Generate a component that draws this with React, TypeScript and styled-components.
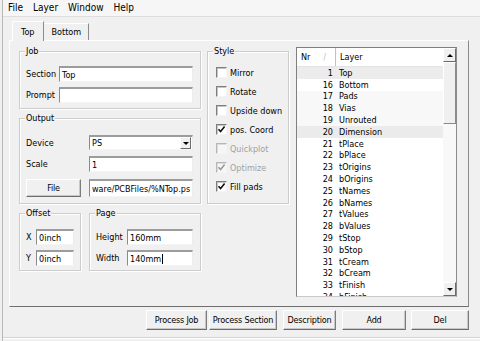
import styled, { createGlobalStyle } from "styled-components";

const GlobalStyle = createGlobalStyle`
  html, body {
    margin: 0;
    padding: 0;
    background: #f0f0f0;
  }
  body {
    font-family: "DejaVu Sans Condensed", "Liberation Sans", sans-serif;
    font-size: 9px;
    color: #000;
  }
`;

const layers: [number, string, string?][] = [
  [1, "Top", "#ececec"],
  [16, "Bottom"],
  [17, "Pads", "#f8f8f8"],
  [18, "Vias", "#f8f8f8"],
  [19, "Unrouted", "#f8f8f8"],
  [20, "Dimension", "#ebebeb"],
  [21, "tPlace"],
  [22, "bPlace"],
  [23, "tOrigins"],
  [24, "bOrigins"],
  [25, "tNames"],
  [26, "bNames"],
  [27, "tValues"],
  [28, "bValues"],
  [29, "tStop"],
  [30, "bStop"],
  [31, "tCream"],
  [32, "bCream"],
  [33, "tFinish"],
  [34, "bFinish"],
];

const styleOptions = [
  { text: "Mirror", checked: false, disabled: false },
  { text: "Rotate", checked: false, disabled: false },
  { text: "Upside down", checked: false, disabled: false },
  { text: "pos. Coord", checked: true, disabled: false },
  { text: "Quickplot", checked: false, disabled: true },
  { text: "Optimize", checked: true, disabled: true },
  { text: "Fill pads", checked: true, disabled: false },
];

const buttons = [
  { text: "Process Job", w: 61, gap: 0 },
  { text: "Process Section", w: 68, gap: 2 },
  { text: "Description", w: 53, gap: 6 },
  { text: "Add", w: 64, gap: 6 },
  { text: "Del", w: 58, gap: 5 },
];

export default function App() {
  return (
    <>
      <GlobalStyle />
      <Window>
        <MenuBar>
          <MenuItem>File</MenuItem>
          <MenuItem>Layer</MenuItem>
          <MenuItem>Window</MenuItem>
          <MenuItem>Help</MenuItem>
        </MenuBar>

        <TabStrip>
          <Tab $active>Top</Tab>
          <Tab>Bottom</Tab>
        </TabStrip>

        <TabPanel>
          <LeftCol>
            <GroupBox $h={58} $pad="14px 7px 0 6px">
              <Caption>Job</Caption>
              <FieldRow>
                <Label $w={33}>Section</Label>
                <TextBox $w={134}>Top</TextBox>
              </FieldRow>
              <FieldRow $mt={5}>
                <Label $w={33}>Prompt</Label>
                <TextBox $w={134} />
              </FieldRow>
            </GroupBox>

            <GroupBox $h={86} $pad="16px 7px 0 6px">
              <Caption>Output</Caption>
              <FieldRow>
                <Label $w={63}>Device</Label>
                <TextBox $w={104} $h={15}>
                  PS
                  <DropButton>
                    <Arrow $down />
                  </DropButton>
                </TextBox>
              </FieldRow>
              <FieldRow $mt={6}>
                <Label $w={63}>Scale</Label>
                <TextBox $w={104}>1</TextBox>
              </FieldRow>
              <FieldRow $mt={7}>
                <PushButton $w={55} $h={18}>
                  File
                </PushButton>
                <TextBox $w={104} $h={18} $ml={8}>
                  ware/PCBFiles/%NTop.ps
                </TextBox>
              </FieldRow>
            </GroupBox>

            <GroupRow>
              <GroupBox $h={58} $w={62} $pad="15px 0 0 6px">
                <Caption>Offset</Caption>
                <FieldRow>
                  <Label $w={10}>X</Label>
                  <TextBox $w={38}>0inch</TextBox>
                </FieldRow>
                <FieldRow $mt={5}>
                  <Label $w={10}>Y</Label>
                  <TextBox $w={38}>0inch</TextBox>
                </FieldRow>
              </GroupBox>
              <GroupBox $h={58} $w={112} $pad="15px 0 0 6px">
                <Caption>Page</Caption>
                <FieldRow>
                  <Label $w={31}>Height</Label>
                  <TextBox $w={66}>160mm</TextBox>
                </FieldRow>
                <FieldRow $mt={5}>
                  <Label $w={31}>Width</Label>
                  <TextBox $w={66}>
                    140mm
                    <Caret />
                  </TextBox>
                </FieldRow>
              </GroupBox>
            </GroupRow>
          </LeftCol>

          <GroupBox $h={153} $w={82} $pad="11px 0 0 8px" $top={4}>
            <Caption>Style</Caption>
            {styleOptions.map((opt) => (
              <CheckRow key={opt.text} $disabled={opt.disabled}>
                <CheckBox $disabled={opt.disabled}>
                  {opt.checked && (
                    <svg width="9" height="9" viewBox="0 0 9 9">
                      <path
                        d="M1.5 4.2 L3.6 6.6 L7.6 1.6"
                        fill="none"
                        stroke={opt.disabled ? "#9a9a9a" : "#111"}
                        strokeWidth="1.6"
                      />
                    </svg>
                  )}
                </CheckBox>
                {opt.text}
              </CheckRow>
            ))}
          </GroupBox>

          <ListBox>
            <ListMain>
              <ListHeader>
                <HeadCell $w={39}>
                  Nr<SortMark>/</SortMark>
                </HeadCell>
                <HeadCell>Layer</HeadCell>
              </ListHeader>
              <Rows>
                {layers.map(([nr, name, bg]) => (
                  <Row key={nr} $bg={bg}>
                    <NrCell>{nr}</NrCell>
                    <NameCell>{name}</NameCell>
                  </Row>
                ))}
              </Rows>
            </ListMain>
            <ScrollBar>
              <ScrollButton>
                <Arrow />
              </ScrollButton>
              <Thumb />
              <Track />
              <ScrollButton>
                <Arrow $down />
              </ScrollButton>
            </ScrollBar>
          </ListBox>
        </TabPanel>

        <ButtonRow>
          {buttons.map((b) => (
            <PushButton key={b.text} $w={b.w} $h={20} $ml={b.gap}>
              {b.text}
            </PushButton>
          ))}
        </ButtonRow>

        <StatusBar />
      </Window>
    </>
  );
}

const Window = styled.div`
  box-sizing: border-box;
  width: 478px;
  height: 341px;
  margin-left: 2px;
  border-left: 1px solid #b9b9b9;
  display: flex;
  flex-direction: column;
  overflow: hidden;
  background: #f0f0f0;
`;

const MenuBar = styled.div`
  box-sizing: border-box;
  height: 17px;
  display: flex;
  align-items: center;
  padding-left: 0;
  background: #f6f6f6;
  border-bottom: 1px solid #dedede;
`;

const MenuItem = styled.span`
  font-size: 10px;
  padding: 0 5px 1px 5px;
`;

const TabStrip = styled.div`
  display: flex;
  align-items: flex-end;
  height: 23px;
  padding-left: 9px;
`;

const Tab = styled.div<{ $active?: boolean }>`
  box-sizing: border-box;
  height: ${({ $active }) => ($active ? "20px" : "17px")};
  padding: 0 ${({ $active }) => ($active ? "8px" : "7px")};
  display: flex;
  align-items: center;
  border-top: 1px solid #fff;
  border-left: 1px solid ${({ $active }) => ($active ? "#fff" : "transparent")};
  border-right: 1px solid #8c8c8c;
  background: #f0f0f0;
  margin-bottom: ${({ $active }) => ($active ? "-1px" : "0")};
  position: relative;
  z-index: ${({ $active }) => ($active ? 1 : 0)};
`;

const TabPanel = styled.div`
  box-sizing: border-box;
  width: 460px;
  height: 267px;
  margin-left: 6px;
  padding: 6px 9px 0 9px;
  display: flex;
  align-items: flex-start;
  border-top: 1px solid #fff;
  border-left: 1px solid #fff;
  border-right: 1px solid #8a8a8a;
  border-bottom: 1px solid #6e6e6e;
`;

const LeftCol = styled.div`
  width: 182px;
  margin-top: 4px;
  display: flex;
  flex-direction: column;
  gap: 9px;
`;

const GroupRow = styled.div`
  display: flex;
  gap: 8px;
`;

const GroupBox = styled.div<{ $h: number; $w?: number; $pad: string; $top?: number }>`
  position: relative;
  box-sizing: border-box;
  height: ${({ $h }) => $h}px;
  width: ${({ $w }) => ($w ? `${$w}px` : "auto")};
  padding: ${({ $pad }) => $pad};
  margin-top: ${({ $top }) => $top ?? 0}px;
  margin-left: ${({ $top }) => ($top ? "6px" : "0")};
  border: 1px solid #cdcdcd;
  box-shadow: 1px 1px 0 #fff, inset 1px 1px 0 #fff;
`;

const Caption = styled.span`
  position: absolute;
  top: -7px;
  left: 5px;
  padding: 0 1px;
  background: #f0f0f0;
  line-height: 12px;
`;

const FieldRow = styled.div<{ $mt?: number }>`
  display: flex;
  align-items: center;
  margin-top: ${({ $mt }) => $mt ?? 0}px;
`;

const Label = styled.span<{ $w: number }>`
  width: ${({ $w }) => $w}px;
  flex: none;
  white-space: nowrap;
`;

const TextBox = styled.div<{ $w: number; $h?: number; $ml?: number }>`
  position: relative;
  box-sizing: border-box;
  width: ${({ $w }) => $w}px;
  height: ${({ $h }) => $h ?? 16}px;
  margin-left: ${({ $ml }) => $ml ?? 0}px;
  padding-left: 2px;
  display: flex;
  align-items: center;
  white-space: nowrap;
  overflow: hidden;
  background: #fff;
  border-top: 2px solid #9c9c9c;
  border-left: 1px solid #8a8a8a;
  border-right: 1px solid #ececec;
  border-bottom: 1px solid #f4f4f4;
`;

const Caret = styled.span`
  width: 1px;
  height: 10px;
  background: #000;
  margin-left: 1px;
`;

const DropButton = styled.div`
  position: absolute;
  right: 1px;
  top: 0;
  bottom: 0;
  width: 11px;
  box-sizing: border-box;
  display: flex;
  align-items: center;
  justify-content: center;
  background: #f0f0f0;
  border-top: 1px solid #fff;
  border-left: 1px solid #fff;
  border-right: 1px solid #6a6a6a;
  border-bottom: 1px solid #6a6a6a;
`;

const Arrow = styled.span<{ $down?: boolean }>`
  width: 0;
  height: 0;
  border-left: 3px solid transparent;
  border-right: 3px solid transparent;
  ${({ $down }) =>
    $down ? "border-top: 3px solid #000;" : "border-bottom: 3px solid #000;"}
`;

const PushButton = styled.div<{ $w: number; $h: number; $ml?: number }>`
  box-sizing: border-box;
  width: ${({ $w }) => $w}px;
  height: ${({ $h }) => $h}px;
  margin-left: ${({ $ml }) => $ml ?? 0}px;
  flex: none;
  display: flex;
  align-items: center;
  justify-content: center;
  white-space: nowrap;
  letter-spacing: -0.2px;
  background: #f0f0f0;
  border-top: 1px solid #fff;
  border-left: 1px solid #fff;
  border-right: 1px solid #7c7c7c;
  border-bottom: 1px solid #6c6c6c;
  box-shadow: inset -1px -1px 0 #c8c8c8;
`;

const CheckRow = styled.div<{ $disabled?: boolean }>`
  height: 19px;
  display: flex;
  align-items: center;
  gap: 3px;
  white-space: nowrap;
  color: ${({ $disabled }) => ($disabled ? "#a2a2a2" : "#000")};
`;

const CheckBox = styled.span<{ $disabled?: boolean }>`
  box-sizing: border-box;
  width: 11px;
  height: 11px;
  flex: none;
  display: flex;
  align-items: center;
  justify-content: center;
  background: ${({ $disabled }) => ($disabled ? "#f6f6f6" : "#fff")};
  border-top: 1px solid ${({ $disabled }) => ($disabled ? "#b6b6b6" : "#7e7e7e")};
  border-left: 1px solid ${({ $disabled }) => ($disabled ? "#b6b6b6" : "#7e7e7e")};
  border-right: 1px solid #f4f4f4;
  border-bottom: 1px solid #f4f4f4;
  box-shadow: inset 1px 1px 0 ${({ $disabled }) => ($disabled ? "#dcdcdc" : "#c4c4c4")};
`;

const ListBox = styled.div`
  box-sizing: border-box;
  width: 161px;
  height: 250px;
  margin-left: 7px;
  display: flex;
  background: #fff;
  border-top: 1px solid #7f7f7f;
  border-left: 1px solid #7f7f7f;
  border-right: 1px solid #8c8c8c;
  border-bottom: 1px solid #c8c8c8;
`;

const ListMain = styled.div`
  flex: 1;
  display: flex;
  flex-direction: column;
  overflow: hidden;
`;

const ListHeader = styled.div`
  box-sizing: border-box;
  height: 19px;
  flex: none;
  display: flex;
  background: #fff;
  border-bottom: 1px solid #e4e4e4;
`;

const HeadCell = styled.div<{ $w?: number }>`
  box-sizing: border-box;
  width: ${({ $w }) => ($w ? `${$w}px` : "auto")};
  flex: ${({ $w }) => ($w ? "none" : "1")};
  display: flex;
  align-items: center;
  padding-left: 4px;
  border-right: ${({ $w }) => ($w ? "1px solid #c2c2c2" : "none")};
`;

const SortMark = styled.span`
  margin-left: auto;
  margin-right: 9px;
  color: #b4b4b4;
  font-size: 8px;
`;

const Rows = styled.div`
  flex: 1;
  overflow: hidden;
`;

const Row = styled.div<{ $bg?: string }>`
  height: 11.8px;
  display: flex;
  align-items: center;
  background: ${({ $bg }) => $bg ?? "#fff"};
  white-space: nowrap;
`;

const NrCell = styled.span`
  width: 36px;
  flex: none;
  text-align: right;
`;

const NameCell = styled.span`
  padding-left: 6px;
`;

const ScrollBar = styled.div`
  width: 13px;
  flex: none;
  display: flex;
  flex-direction: column;
  background: #f6f6f6;
`;

const ScrollButton = styled.div`
  box-sizing: border-box;
  height: 14px;
  flex: none;
  display: flex;
  align-items: center;
  justify-content: center;
  background: #f0f0f0;
  border-top: 1px solid #fff;
  border-left: 1px solid #fff;
  border-right: 1px solid #6a6a6a;
  border-bottom: 1px solid #6a6a6a;
`;

const Thumb = styled.div`
  box-sizing: border-box;
  height: 62px;
  flex: none;
  background: #f0f0f0;
  border-top: 1px solid #fff;
  border-left: 1px solid #fff;
  border-right: 1px solid #8a8a8a;
  border-bottom: 1px solid #8a8a8a;
`;

const Track = styled.div`
  flex: 1;
  background: #f8f8f8;
`;

const ButtonRow = styled.div`
  display: flex;
  justify-content: flex-end;
  margin-top: 3px;
  padding-right: 11px;
`;

const StatusBar = styled.div`
  margin-top: 7px;
  flex: 1;
  border-top: 1px solid #d4d4d4;
  box-shadow: inset 0 1px 0 #fff;
`;
